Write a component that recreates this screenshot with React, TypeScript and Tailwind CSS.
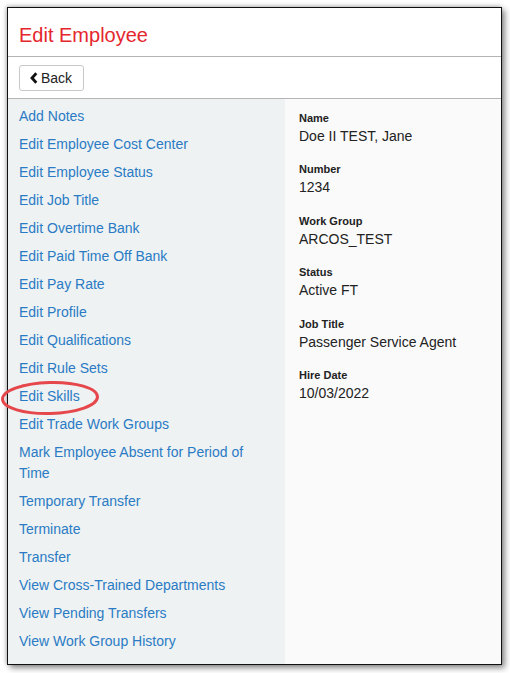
import React from "react";

const links: string[] = [
  "Add Notes",
  "Edit Employee Cost Center",
  "Edit Employee Status",
  "Edit Job Title",
  "Edit Overtime Bank",
  "Edit Paid Time Off Bank",
  "Edit Pay Rate",
  "Edit Profile",
  "Edit Qualifications",
  "Edit Rule Sets",
  "Edit Skills",
  "Edit Trade Work Groups",
  "Mark Employee Absent for Period of Time",
  "Temporary Transfer",
  "Terminate",
  "Transfer",
  "View Cross-Trained Departments",
  "View Pending Transfers",
  "View Work Group History",
];

const fields: [string, string][] = [
  ["Name", "Doe II TEST, Jane"],
  ["Number", "1234"],
  ["Work Group", "ARCOS_TEST"],
  ["Status", "Active FT"],
  ["Job Title", "Passenger Service Agent"],
  ["Hire Date", "10/03/2022"],
];

export default function App() {
  return (
    <div
      className="relative w-[510px] h-[673px] bg-white overflow-hidden"
      style={{ fontFamily: '"Liberation Sans", Arial, sans-serif' }}
    >
      <div className="ml-[7px] mt-[7px] w-[495px] h-[658px] border border-[#111] bg-white flex flex-col shadow-[3px_3px_6px_rgba(0,0,0,0.45),-1px_-1px_4px_rgba(0,0,0,0.25)]">
        <div className="h-[49px] shrink-0 border-b border-[#b4b4b4] flex items-center pl-[11px] pt-[6px]">
          <span className="text-[20px] leading-[24px] text-[#e5262d]">Edit Employee</span>
        </div>
        <div className="h-[42px] shrink-0 border-b border-[#b4b4b4] flex items-center pl-[11px] pt-[1px]">
          <button className="h-[26px] w-[65px] pl-[10px] flex items-center gap-[3px] bg-white border border-[#c8c8c8] rounded-[3px] text-[14px] text-[#222]">
            <svg width="8" height="12" viewBox="0 0 8 12">
              <path d="M6.3 1.3 L2 6 L6.3 10.7" fill="none" stroke="#111" strokeWidth="2.8" />
            </svg>
            <span>Back</span>
          </button>
        </div>
        <div className="flex flex-1 min-h-0">
          <div className="w-[277px] shrink-0 bg-[#eef2f3] pt-[3px] pl-[11px] pr-[20px]">
            {links.map((l) => (
              <div key={l} className="py-[3.5px] text-[14px] leading-[21px] text-[#2a7bc4]">
                {l}
              </div>
            ))}
          </div>
          <div className="flex-1 bg-[#fafafa] pt-[11px] pl-[14px]">
            {fields.map(([k, v]) => (
              <div key={k} className="mb-[15.4px]">
                <div className="text-[11px] leading-[16px] font-bold text-[#222]">{k}</div>
                <div className="text-[14px] leading-[20px] text-[#222]">{v}</div>
              </div>
            ))}
          </div>
        </div>
      </div>
      <svg className="absolute left-0 top-[376px]" width="104" height="44" viewBox="0 0 104 44">
        <ellipse cx="50" cy="22" rx="47.5" ry="15.5" fill="none" stroke="#e5474b" strokeWidth="3" transform="rotate(-1.5 50 22)" />
      </svg>
    </div>
  );
}
